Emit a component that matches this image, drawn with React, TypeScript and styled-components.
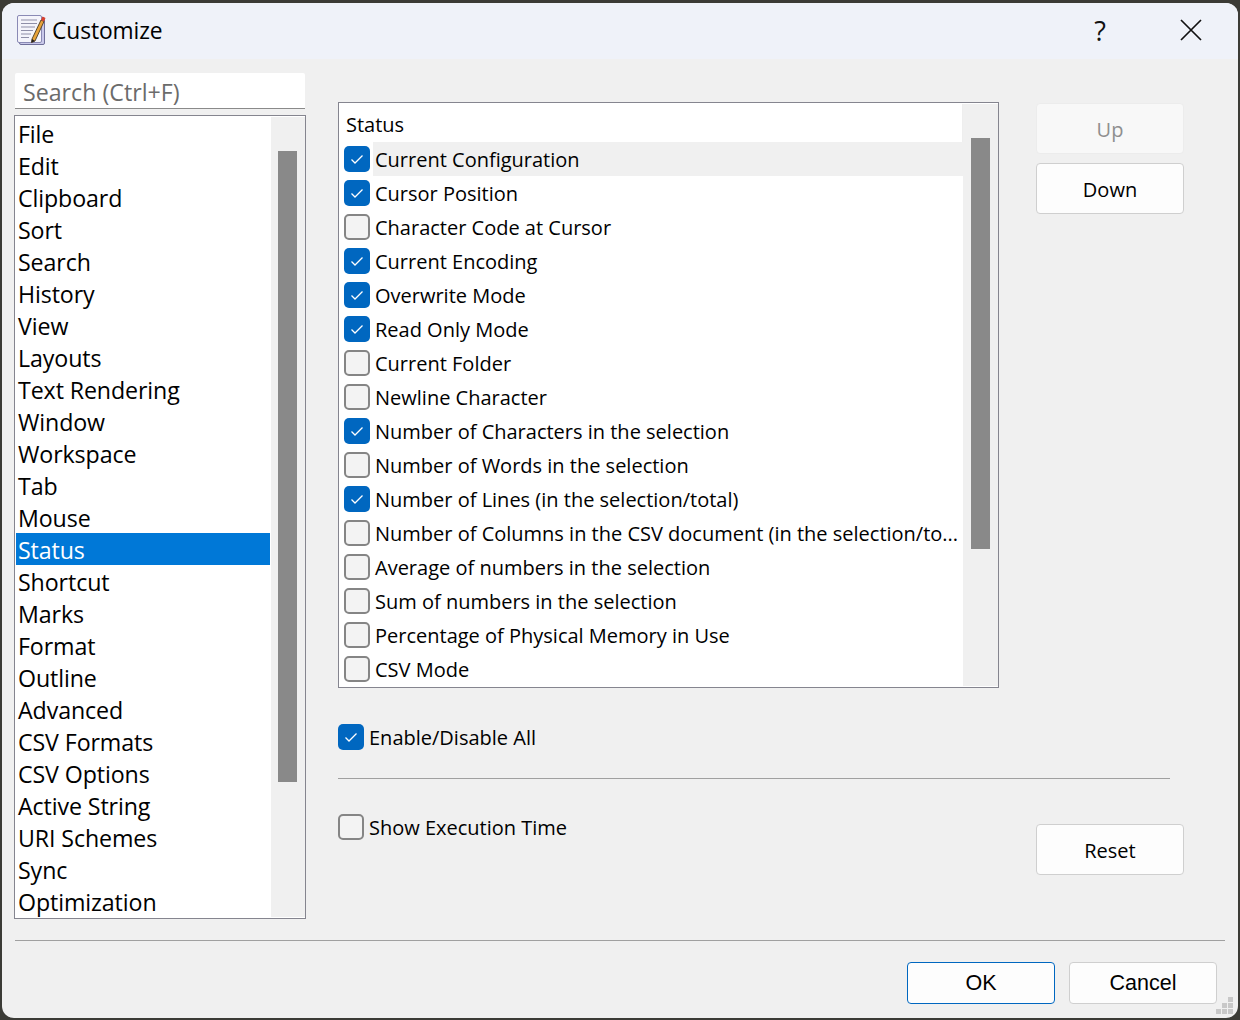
import React from 'react';
import styled, { createGlobalStyle } from 'styled-components';

const GlobalStyle = createGlobalStyle`
  html, body {margin: 0;padding: 0;background: #3b3b36;}
  body {font-family: "Open Sans", "Noto Sans", "Liberation Sans", sans-serif;color: #000;}
  * {box-sizing: border-box;}
`;

const Frame = styled.div`
  width: 1240px;
  height: 1020px;
  padding: 3px 2px 2px;
  background: #3b3b36;
`;

const Dialog = styled.div`
  position: relative;
  height: 1015px;
  display: flex;
  flex-direction: column;
  overflow: hidden;
  border-radius: 12px;
  background: #f0f0f0;
`;

const TitleBar = styled.div`
  flex-shrink: 0;
  height: 56px;
  display: flex;
  align-items: center;
  padding: 0 0 2px 14px;
  background: #eff2f9;
  font-size: 22.8px;
  svg {flex-shrink: 0;}
`;

const Title = styled.span`
  flex: 1;
  margin-left: 6px;
  letter-spacing: -.1px;
`;

const TitleButton = styled.button<{ $gap: number }>`
  width: 56px;
  height: 44px;
  margin-right: ${p => p.$gap}px;
  padding: 0;
  display: flex;
  align-items: center;
  justify-content: center;
  border: none;
  background: transparent;
  color: #111;
  font-family: inherit;
  font-size: 27px;
`;

const Body = styled.div`
  flex: 1;
  display: flex;
  gap: 32px;
  padding: 14px 0 0 12px;
`;

const Sidebar = styled.div`
  width: 292px;
  display: flex;
  flex-direction: column;
  gap: 6px;
`;

const SearchBox = styled.input`
  height: 36px;
  margin: 0 1px;
  padding: 2px 8px 0;
  border: none;
  border-bottom: 1px solid #8a8a8a;
  border-radius: 2px 2px 0 0;
  background: #fff;
  outline: none;
  font-family: inherit;
  font-size: 23.2px;
  &::placeholder {color: #6b6b6b;opacity: 1;}
`;

const ListFrame = styled.div`
  display: flex;
  background: #fff;
  border: 1px solid #85858f;
`;

const CategoryList = styled.div`
  flex: 1;
  min-width: 0;
  padding: 1px 1px 1px 1px;
`;

const CategoryItem = styled.div<{ $active?: boolean }>`
  height: 32px;
  padding-left: 2px;
  line-height: 34px;
  font-size: 23.2px;
  white-space: nowrap;
  letter-spacing: -.1px;
  color: ${p => (p.$active ? '#fff' : '#000')};
  background: ${p => (p.$active ? '#0078d7' : 'transparent')};
`;

const ScrollTrack = styled.div<{ $top: number; $bar: number; $width: number; $inset: number }>`
  flex-shrink: 0;
  width: ${p => p.$width}px;
  margin: 1px 0 1px;
  padding: ${p => p.$top}px 0 0 ${p => p.$inset}px;
  background: #f0f0f0;
  &::before {
    content: '';
    display: block;
    width: 19px;
    height: ${p => p.$bar}px;
    background: #898989;
  }
`;

const Panel = styled.div`
  width: 846px;
  margin-top: 29px;
  height: 773px;
  display: grid;
  grid-template-columns: 661px 148px;
  grid-template-rows: 586px 90px 1px auto;
  column-gap: 37px;
  align-content: start;
`;

const StatusFrame = styled(ListFrame)`
  height: 586px;
`;

const StatusColumn = styled.div`
  flex: 1;
  min-width: 0;
  padding-top: 1px;
`;

const StatusHeader = styled.div`
  height: 38px;
  padding: 0 0 0 7px;
  line-height: 42px;
  font-size: 20px;
  border-right: 1px solid #eee;
`;

const StatusRow = styled.label<{ $active?: boolean }>`
  height: 34px;
  display: flex;
  align-items: center;
  padding-left: 5px;
  span {
    background: ${p => (p.$active ? '#f0f0f0' : 'transparent')};
  }
`;

const RowLabel = styled.span`
  flex: 1;
  min-width: 0;
  height: 34px;
  margin-left: 3px;
  padding-left: 2px;
  line-height: 36px;
  font-size: 20px;
  white-space: nowrap;
`;

const CheckBox = styled.span<{ $checked?: boolean }>`
  flex-shrink: 0;
  width: 26px;
  height: 26px;
  display: flex;
  align-items: center;
  justify-content: center;
  border-radius: 5px;
  border: ${p => (p.$checked ? 'none' : '2px solid #858585')};
  background: ${p => (p.$checked ? '#0067c0' : '#f3f3f3')} !important;
`;

const ButtonStack = styled.div`
  display: flex;
  flex-direction: column;
  gap: 9px;
  padding-top: 1px;
`;

const PushButton = styled.button<{ $primary?: boolean }>`
  width: 148px;
  height: 51px;
  padding: 2px 0 0;
  border-radius: 4px;
  border: 1px solid ${p => (p.$primary ? '#0067c0' : '#cfcfcf')};
  background: #fdfdfd;
  color: #000;
  font-family: inherit;
  font-size: 20px;
  &:disabled {
    background: #f8f8f8;
    border-color: #ececec;
    color: #8f8f8f;
  }
`;

const FooterButton = styled(PushButton)`
  height: 42px;
  padding: 0;
  font-family: "Liberation Sans", Arial, sans-serif;
  font-size: 21.5px;
`;

const OptionRow = styled.div<{ $pad: number; $wide?: boolean }>`
  display: flex;
  align-items: flex-start;
  gap: 5px;
  padding-top: ${p => p.$pad}px;
  font-size: 20px;
  line-height: 28px;
  grid-column: ${p => (p.$wide ? '1 / 3' : 'auto')};
`;

const Separator = styled.div`
  grid-column: 1 / 3;
  width: 832px;
  height: 1px;
  background: #a0a0a0;
`;

const ResetCell = styled.div`
  padding-top: 45px;
`;

const Footer = styled.div`
  flex-shrink: 0;
  height: 78px;
  margin: 0 13px;
  padding-top: 21px;
  display: flex;
  justify-content: flex-end;
  gap: 14px;
  padding-right: 8px;
  border-top: 1px solid #a0a0a0;
`;

const Grip = styled.svg`
  position: absolute;
  right: 5px;
  bottom: 4px;
`;

const categories = [
  'File', 'Edit', 'Clipboard', 'Sort', 'Search', 'History', 'View', 'Layouts', 'Text Rendering',
  'Window', 'Workspace', 'Tab', 'Mouse', 'Status', 'Shortcut', 'Marks', 'Format', 'Outline',
  'Advanced', 'CSV Formats', 'CSV Options', 'Active String', 'URI Schemes', 'Sync', 'Optimization',
];

const statusItems: [string, boolean][] = [
  ['Current Configuration', true],
  ['Cursor Position', true],
  ['Character Code at Cursor', false],
  ['Current Encoding', true],
  ['Overwrite Mode', true],
  ['Read Only Mode', true],
  ['Current Folder', false],
  ['Newline Character', false],
  ['Number of Characters in the selection', true],
  ['Number of Words in the selection', false],
  ['Number of Lines (in the selection/total)', true],
  ['Number of Columns in the CSV document (in the selection/to...', false],
  ['Average of numbers in the selection', false],
  ['Sum of numbers in the selection', false],
  ['Percentage of Physical Memory in Use', false],
  ['CSV Mode', false],
];

const Check = ({ checked }: { checked?: boolean }) => (
  <CheckBox $checked={checked}>
    {checked && (
      <svg width="16" height="16" viewBox="0 0 16 16" fill="none">
        <path d="M2.5 8.5 L6 12 L13.5 4.5" stroke="#fff" strokeWidth="1.3" />
      </svg>
    )}
  </CheckBox>
);

const NotepadIcon = () => (
  <svg width="30" height="32" viewBox="0 0 30 32">
    <rect x="3.5" y="3.5" width="25" height="27" rx="1.5" fill="#c9c9ea" stroke="#6f6f9a" />
    <rect x="1.5" y="1.5" width="24" height="27" rx="1.5" fill="#f4f4fb" stroke="#8a8ab5" />
    <path d="M5 6h16M5 9.5h16M5 13h14M5 16.5h12M5 20h10M5 23.5h8" stroke="#8f8fa8" strokeWidth="1" />
    <path d="M16 25 L25 6 L28 7.5 L19 27 L15.5 28.5 Z" fill="#e8a33a" stroke="#4a3a20" strokeWidth=".9" />
    <path d="M25 6 L26.5 2.5 L29.5 4 L28 7.5 Z" fill="#d9412f" />
    <path d="M15.5 28.5 L16 25 L19 27 Z" fill="#222" />
  </svg>
);

const App = () => {
  return (
    <Frame>
      <GlobalStyle />
      <Dialog>
        <TitleBar>
          <NotepadIcon />
          <Title>Customize</Title>
          <TitleButton $gap={35}>?</TitleButton>
          <TitleButton $gap={19}>
            <svg width="22" height="22" viewBox="0 0 22 22" fill="none">
              <path d="M1 1 L21 21 M21 1 L1 21" stroke="#111" strokeWidth="1.7" />
            </svg>
          </TitleButton>
        </TitleBar>
        <Body>
          <Sidebar>
            <SearchBox placeholder="Search (Ctrl+F)" />
            <ListFrame>
              <CategoryList>
                {categories.map(name => (
                  <CategoryItem key={name} $active={name === 'Status'}>{name}</CategoryItem>
                ))}
              </CategoryList>
              <ScrollTrack $width={34} $top={34} $bar={631} $inset={7} />
            </ListFrame>
          </Sidebar>
          <Panel>
            <StatusFrame>
              <StatusColumn>
                <StatusHeader>Status</StatusHeader>
                {statusItems.map(([label, checked], i) => (
                  <StatusRow key={label} $active={i === 0}>
                    <Check checked={checked} />
                    <RowLabel>{label}</RowLabel>
                  </StatusRow>
                ))}
              </StatusColumn>
              <ScrollTrack $width={35} $top={34} $bar={411} $inset={8} />
            </StatusFrame>
            <ButtonStack>
              <PushButton disabled>Up</PushButton>
              <PushButton>Down</PushButton>
            </ButtonStack>
            <OptionRow $pad={36} $wide>
              <Check checked />
              Enable/Disable All
            </OptionRow>
            <Separator />
            <OptionRow $pad={35}>
              <Check />
              Show Execution Time
            </OptionRow>
            <ResetCell>
              <PushButton>Reset</PushButton>
            </ResetCell>
          </Panel>
        </Body>
        <Footer>
          <FooterButton $primary>OK</FooterButton>
          <FooterButton>Cancel</FooterButton>
        </Footer>
        <Grip width="17" height="17" viewBox="0 0 17 17" fill="#c8c8c8">
          <rect x="12" y="0" width="5" height="5" />
          <rect x="6" y="6" width="5" height="5" />
          <rect x="12" y="6" width="5" height="5" />
          <rect x="0" y="12" width="5" height="5" />
          <rect x="6" y="12" width="5" height="5" />
          <rect x="12" y="12" width="5" height="5" />
        </Grip>
      </Dialog>
    </Frame>
  );
};

export default App;
